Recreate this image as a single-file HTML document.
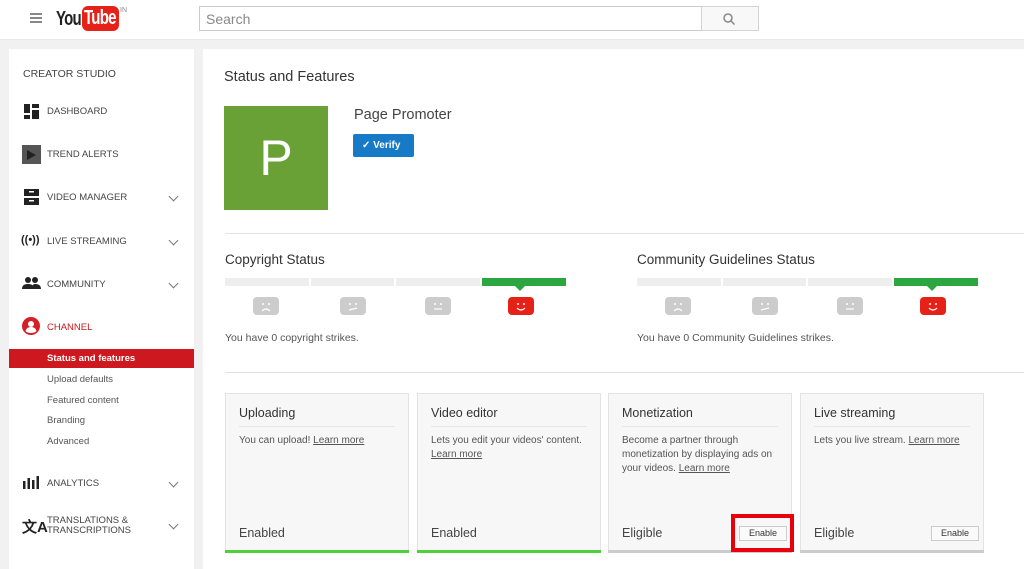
<!DOCTYPE html>
<html><head><meta charset="utf-8"><style>
*{margin:0;padding:0;box-sizing:border-box}
body{width:1024px;height:562px;overflow:hidden;background:#f1f1f1;font-family:"Liberation Sans",Arial,sans-serif;position:relative;color:#333}
.a{position:absolute}
.hdr{left:0;top:0;width:1024px;height:40px;background:#fff;border-bottom:1px solid #e8e8e8}
.side{left:9px;top:49px;width:185px;height:520px;background:#fff}
.main{left:203px;top:49px;width:830px;height:520px;background:#fff}
.nav{font-size:9.5px;color:#444;text-transform:uppercase;left:47px}
.chev{left:170px;width:7px;height:7px;border-right:1.6px solid #777;border-bottom:1.6px solid #777;transform:rotate(45deg)}
.sub{left:47px;font-size:9.5px;color:#555}
.bar{height:8px;top:278px;background:#eee}
.face{width:26px;height:18px;top:297px}
.card{width:184px;height:158px;top:393px;background:#f7f7f7;border:1px solid #e3e3e3}
.card .t{position:absolute;left:13px;top:12px;font-size:12.5px;color:#333}
.card .ln{position:absolute;left:13px;right:13px;top:32px;border-top:1px solid #e6e6e6}
.card .d{position:absolute;left:13px;top:40px;right:8px;font-size:10px;color:#555;line-height:14px}
.card .d u{color:#555}
.card .f{position:absolute;left:13px;top:132px;font-size:12.5px;color:#444}
.card .bb{position:absolute;left:-1px;right:-1px;bottom:-3px;height:3px}
.btn{position:absolute;right:4px;top:132px;width:48px;height:15px;border:1px solid #ccc;background:#fafafa;font-size:9px;text-align:center;line-height:13px;color:#333}
</style></head><body>
<div class="a hdr"></div>
<div class="a" style="left:30px;top:13px;width:12px;height:2px;background:#888;box-shadow:0 4px 0 #888,0 8px 0 #888"></div>
<div class="a" style="left:56px;top:8px;font-size:20px;font-weight:bold;letter-spacing:-1px;color:#222;transform:scaleX(.75);transform-origin:left">You</div>
<div class="a" style="left:82px;top:6px;width:37px;height:25px;background:#e62117;border-radius:6px;overflow:hidden"><div style="color:#fff;font-size:20px;font-weight:bold;letter-spacing:-1px;line-height:25px;margin-left:2px;transform:scaleX(.75);transform-origin:left">Tube</div></div>
<div class="a" style="left:120px;top:7px;font-size:7px;color:#888">IN</div>
<div class="a" style="left:199px;top:6px;width:503px;height:25px;border:1px solid #ccc;background:#fff;font-size:14px;color:#888;padding:4px 6px">Search</div>
<div class="a" style="left:701px;top:6px;width:58px;height:25px;border:1px solid #d3d3d3;background:#f8f8f8"></div>
<svg class="a" style="left:722px;top:12px" width="14" height="14" viewBox="0 0 14 14"><circle cx="6" cy="6" r="4" fill="none" stroke="#888" stroke-width="1.5"/><path d="M9 9l3.5 3.5" stroke="#888" stroke-width="1.5"/></svg>

<div class="a side"></div>
<div class="a" style="left:23px;top:68px;font-size:10.5px;color:#444">CREATOR STUDIO</div>
<svg class="a" style="left:24px;top:104px" width="15" height="15"><rect x="0" y="0" width="6" height="9" fill="#222"/><rect x="8" y="0" width="7" height="4" fill="#222"/><rect x="0" y="11" width="6" height="4" fill="#222"/><rect x="8" y="6" width="7" height="9" fill="#222"/></svg>
<div class="a nav" style="top:106px">Dashboard</div>
<div class="a" style="left:22px;top:145px;width:19px;height:19px;background:#555"></div>
<div class="a" style="left:27px;top:150px;width:0;height:0;border-left:9px solid #222;border-top:5px solid transparent;border-bottom:5px solid transparent"></div>
<div class="a nav" style="top:149px">Trend alerts</div>
<svg class="a" style="left:24px;top:189px" width="15" height="16"><rect x="0" y="0" width="15" height="7" fill="#222"/><rect x="0" y="9" width="15" height="7" fill="#222"/><rect x="5" y="2" width="5" height="1.5" fill="#fff"/><rect x="5" y="11" width="5" height="1.5" fill="#fff"/></svg>
<div class="a nav" style="top:192px">Video manager</div><div class="a chev" style="top:193px"></div>
<div class="a" style="left:21px;top:234px;font-size:11px;font-weight:bold;color:#222">((•))</div>
<div class="a nav" style="top:236px">Live streaming</div><div class="a chev" style="top:237px"></div>
<svg class="a" style="left:22px;top:277px" width="19" height="13"><circle cx="6" cy="3" r="3" fill="#222"/><circle cx="13" cy="3" r="3" fill="#222"/><path d="M0 12c0-4 3-5 6-5s6 1 6 5zM9 12c1-3 2-5 4-5 3 0 6 1 6 5z" fill="#222"/></svg>
<div class="a nav" style="top:279px">Community</div><div class="a chev" style="top:280px"></div>
<svg class="a" style="left:22px;top:317px" width="18" height="18"><circle cx="9" cy="9" r="9" fill="#d51f27"/><circle cx="9" cy="7" r="3" fill="#fff"/><path d="M3.5 14c1-3 3-4 5.5-4s4.5 1 5.5 4c-1.5 1.5-3.5 2-5.5 2s-4-.5-5.5-2z" fill="#fff"/></svg>
<div class="a nav" style="top:322px;color:#cc181e">Channel</div>
<div class="a" style="left:9px;top:349px;width:185px;height:19px;background:#cc181e"></div>
<div class="a sub" style="top:353px;color:#fff;font-weight:bold">Status and features</div>
<div class="a sub" style="top:374px">Upload defaults</div>
<div class="a sub" style="top:395px">Featured content</div>
<div class="a sub" style="top:415px">Branding</div>
<div class="a sub" style="top:436px">Advanced</div>
<svg class="a" style="left:23px;top:476px" width="16" height="13"><rect x="0" y="5" width="2.5" height="8" fill="#222"/><rect x="4.5" y="2" width="2.5" height="11" fill="#222"/><rect x="9" y="4" width="2.5" height="9" fill="#222"/><rect x="13.5" y="0" width="2.5" height="13" fill="#222"/></svg>
<div class="a nav" style="top:478px">Analytics</div><div class="a chev" style="top:479px"></div>
<div class="a" style="left:22px;top:516px;font-size:15px;color:#222;font-weight:bold">文A</div>
<div class="a nav" style="top:516px;line-height:10px">Translations &amp;<br>Transcriptions</div><div class="a chev" style="top:521px"></div>

<div class="a main"></div>
<div class="a" style="left:224px;top:69px;font-size:14.5px;color:#333">Status and Features</div>
<div class="a" style="left:224px;top:106px;width:104px;height:104px;background:#69a136;color:#fff;font-size:50px;text-align:center;line-height:104px">P</div>
<div class="a" style="left:354px;top:107px;font-size:14.5px;color:#444">Page Promoter</div>
<div class="a" style="left:353px;top:134px;width:61px;height:23px;background:#167ac6;border-radius:2px;color:#fff;font-size:10px;font-weight:bold;line-height:23px;padding-left:9px">✓ Verify</div>
<div class="a" style="left:225px;top:233px;width:800px;border-top:1px solid #e2e2e2"></div>

<div class="a" style="left:225px;top:252px;font-size:13.5px;color:#333">Copyright Status</div>
<div class="a bar" style="left:225px;width:84px"></div><div class="a bar" style="left:311px;width:83px"></div><div class="a bar" style="left:396px;width:84px"></div><div class="a bar" style="left:482px;width:84px;background:#2ba640"></div>
<div class="a" style="left:515px;top:286px;border-left:5px solid transparent;border-right:5px solid transparent;border-top:5px solid #2ba640"></div>
<svg class="a face" style="left:253px"><rect width="26" height="18" rx="4" fill="#ccc"/><circle cx="10" cy="7" r="1" fill="#fff"/><circle cx="16" cy="7" r="1" fill="#fff"/><path d="M9 14q4-4 8 0" stroke="#fff" stroke-width="1.2" fill="none"/></svg>
<svg class="a face" style="left:340px"><rect width="26" height="18" rx="4" fill="#ccc"/><circle cx="10" cy="7" r="1" fill="#fff"/><circle cx="16" cy="7" r="1" fill="#fff"/><path d="M9 13l8-2" stroke="#fff" stroke-width="1.2"/></svg>
<svg class="a face" style="left:425px"><rect width="26" height="18" rx="4" fill="#ccc"/><circle cx="10" cy="7" r="1" fill="#fff"/><circle cx="16" cy="7" r="1" fill="#fff"/><path d="M9 12h8" stroke="#fff" stroke-width="1.2"/></svg>
<svg class="a face" style="left:508px"><rect width="26" height="18" rx="4" fill="#e62117"/><circle cx="10" cy="7" r="1" fill="#fff"/><circle cx="16" cy="7" r="1" fill="#fff"/><path d="M9 11q4 4 8 0" stroke="#fff" stroke-width="1.2" fill="none"/></svg>
<div class="a" style="left:225px;top:332px;font-size:10.5px;color:#555">You have 0 copyright strikes.</div>

<div class="a" style="left:637px;top:252px;font-size:13.5px;color:#333">Community Guidelines Status</div>
<div class="a bar" style="left:637px;width:84px"></div><div class="a bar" style="left:723px;width:83px"></div><div class="a bar" style="left:808px;width:84px"></div><div class="a bar" style="left:894px;width:84px;background:#2ba640"></div>
<div class="a" style="left:927px;top:286px;border-left:5px solid transparent;border-right:5px solid transparent;border-top:5px solid #2ba640"></div>
<svg class="a face" style="left:665px"><rect width="26" height="18" rx="4" fill="#ccc"/><circle cx="10" cy="7" r="1" fill="#fff"/><circle cx="16" cy="7" r="1" fill="#fff"/><path d="M9 14q4-4 8 0" stroke="#fff" stroke-width="1.2" fill="none"/></svg>
<svg class="a face" style="left:752px"><rect width="26" height="18" rx="4" fill="#ccc"/><circle cx="10" cy="7" r="1" fill="#fff"/><circle cx="16" cy="7" r="1" fill="#fff"/><path d="M9 13l8-2" stroke="#fff" stroke-width="1.2"/></svg>
<svg class="a face" style="left:837px"><rect width="26" height="18" rx="4" fill="#ccc"/><circle cx="10" cy="7" r="1" fill="#fff"/><circle cx="16" cy="7" r="1" fill="#fff"/><path d="M9 12h8" stroke="#fff" stroke-width="1.2"/></svg>
<svg class="a face" style="left:920px"><rect width="26" height="18" rx="4" fill="#e62117"/><circle cx="10" cy="7" r="1" fill="#fff"/><circle cx="16" cy="7" r="1" fill="#fff"/><path d="M9 11q4 4 8 0" stroke="#fff" stroke-width="1.2" fill="none"/></svg>
<div class="a" style="left:637px;top:332px;font-size:10.5px;color:#555">You have 0 Community Guidelines strikes.</div>
<div class="a" style="left:225px;top:372px;width:800px;border-top:1px solid #e2e2e2"></div>

<div class="a card" style="left:225px"><div class="t">Uploading</div><div class="ln"></div><div class="d">You can upload! <u>Learn more</u></div><div class="f">Enabled</div><div class="bb" style="background:#4fcf3a"></div></div>
<div class="a card" style="left:417px"><div class="t">Video editor</div><div class="ln"></div><div class="d">Lets you edit your videos' content. <u>Learn more</u></div><div class="f">Enabled</div><div class="bb" style="background:#4fcf3a"></div></div>
<div class="a card" style="left:608px"><div class="t">Monetization</div><div class="ln"></div><div class="d">Become a partner through monetization by displaying ads on your videos. <u>Learn more</u></div><div class="f">Eligible</div><div class="btn">Enable</div><div class="bb" style="background:#ccc"></div></div>
<div class="a card" style="left:800px"><div class="t">Live streaming</div><div class="ln"></div><div class="d">Lets you live stream. <u>Learn more</u></div><div class="f">Eligible</div><div class="btn">Enable</div><div class="bb" style="background:#ccc"></div></div>
<div class="a" style="left:731px;top:514px;width:63px;height:38px;border:4px solid #e8000b"></div>
</body></html>
